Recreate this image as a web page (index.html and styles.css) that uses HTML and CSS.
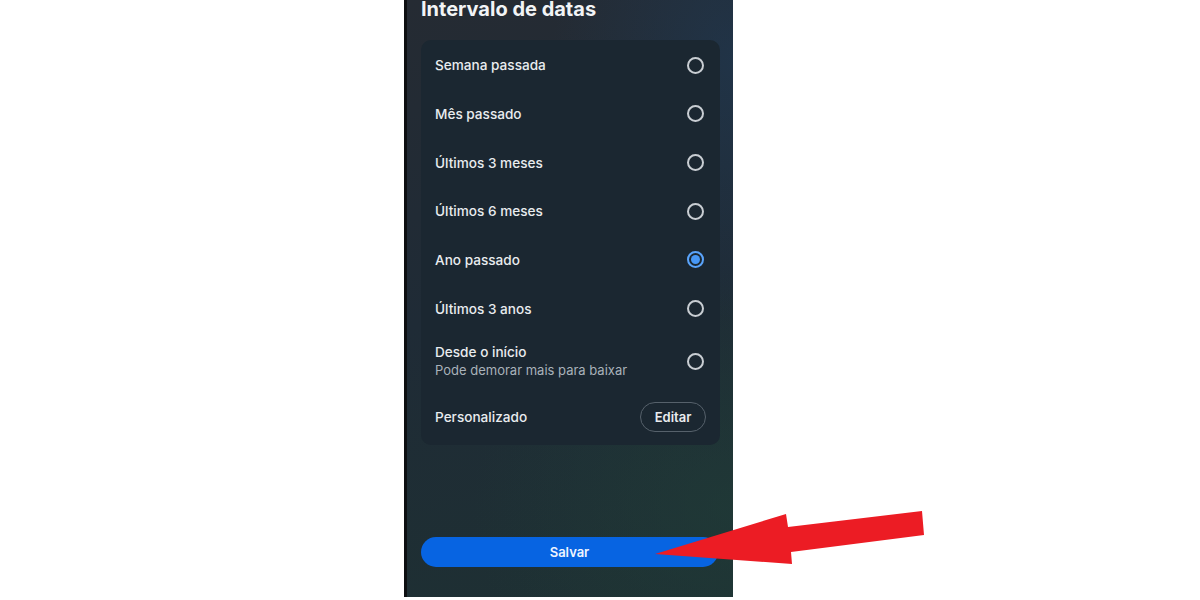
FILE: index.html
```html
<!DOCTYPE html>
<html lang="pt">
<head>
<meta charset="utf-8">
<title>Intervalo de datas</title>
<link rel="stylesheet" href="styles.css">
</head>
<body>
<div class="page">
  <div class="screen">
    <h1 class="title">Intervalo de datas</h1>
    <div class="card">
      <div class="row"><span class="label">Semana passada</span><span class="radio"></span></div>
      <div class="row"><span class="label">Mês passado</span><span class="radio"></span></div>
      <div class="row"><span class="label">Últimos 3 meses</span><span class="radio"></span></div>
      <div class="row"><span class="label">Últimos 6 meses</span><span class="radio"></span></div>
      <div class="row"><span class="label">Ano passado</span><span class="radio selected"></span></div>
      <div class="row"><span class="label">Últimos 3 anos</span><span class="radio"></span></div>
      <div class="row row-tall">
        <div class="stack">
          <span class="label">Desde o início</span>
          <span class="sub">Pode demorar mais para baixar</span>
        </div>
        <span class="radio"></span>
      </div>
      <div class="row row-last"><span class="label">Personalizado</span><span class="edit">Editar</span></div>
    </div>
    <div class="save">Salvar</div>
  </div>
</div>
<svg class="arrow" width="1200" height="600" viewBox="0 0 1200 600" aria-hidden="true">
  <polygon points="655,554 786,514 788,527 922,511 924,535 791,552 792,564" fill="#ec1c24"/>
</svg>
</body>
</html>
```

FILE: styles.css
```css
html, body {
  margin: 0;
  padding: 0;
  background: #ffffff;
}
body {
  width: 1200px;
  height: 600px;
  overflow: hidden;
  position: relative;
  font-family: Inter, "Noto Sans", "Liberation Sans", sans-serif;
}
.page {
  display: flex;
  padding-left: 404px;
}
.screen {
  width: 329px;
  height: 597px;
  box-sizing: border-box;
  border-left: 3px solid #0d0f11;
  padding: 0 13px 30px 14px;
  display: flex;
  flex-direction: column;
  background:
    radial-gradient(ellipse 180px 260px at 100% 10%, rgba(30, 60, 90, 0.5), rgba(30, 60, 90, 0) 100%),
    radial-gradient(ellipse 260px 240px at 100% 85%, rgba(32, 62, 56, 0.6), rgba(32, 62, 56, 0) 100%),
    linear-gradient(170deg, #252b33 0%, #1f2b36 50%, #1e3033 100%);
  overflow: hidden;
}
.title {
  margin: 0 0 22px 0;
  font-size: 20px;
  line-height: 18px;
  font-weight: 700;
  color: #f2f4f6;
  letter-spacing: 0;
}
.card {
  background: #1b2731;
  border-radius: 10px;
  padding: 1px 14px 0 14px;
  display: flex;
  flex-direction: column;
}
.row {
  height: 48.67px;
  display: flex;
  align-items: center;
  justify-content: space-between;
}
.row-tall {
  height: 56px;
  padding-top: 1px;
  box-sizing: border-box;
}
.row-last {
  height: 56px;
}
.stack {
  display: flex;
  flex-direction: column;
}
.label {
  font-size: 13.6px;
  font-weight: 500;
  color: #e9ecef;
  line-height: 18px;
}
.sub {
  font-size: 13px;
  font-weight: 400;
  color: #a9b2ba;
  line-height: 18px;
}
.radio {
  width: 17px;
  height: 17px;
  box-sizing: border-box;
  border: 2px solid #c9ced3;
  border-radius: 50%;
  margin-right: 2px;
  position: relative;
}
.radio.selected {
  border-color: #5aa4fb;
}
.radio.selected::after {
  content: "";
  position: absolute;
  left: 2px;
  top: 2px;
  width: 9px;
  height: 9px;
  border-radius: 50%;
  background: #4797f5;
}
.edit {
  height: 30px;
  width: 66px;
  box-sizing: border-box;
  border: 1px solid #56616b;
  border-radius: 15px;
  display: flex;
  align-items: center;
  justify-content: center;
  font-size: 13px;
  font-weight: 600;
  color: #e9ecef;
}
.save {
  margin-top: auto;
  margin-right: 2px;
  height: 30px;
  border-radius: 15px;
  background: #0764e2;
  color: #eef4ff;
  font-size: 13px;
  font-weight: 600;
  display: flex;
  align-items: center;
  justify-content: center;
}
.arrow {
  position: absolute;
  left: 0;
  top: 0;
  pointer-events: none;
}
```
